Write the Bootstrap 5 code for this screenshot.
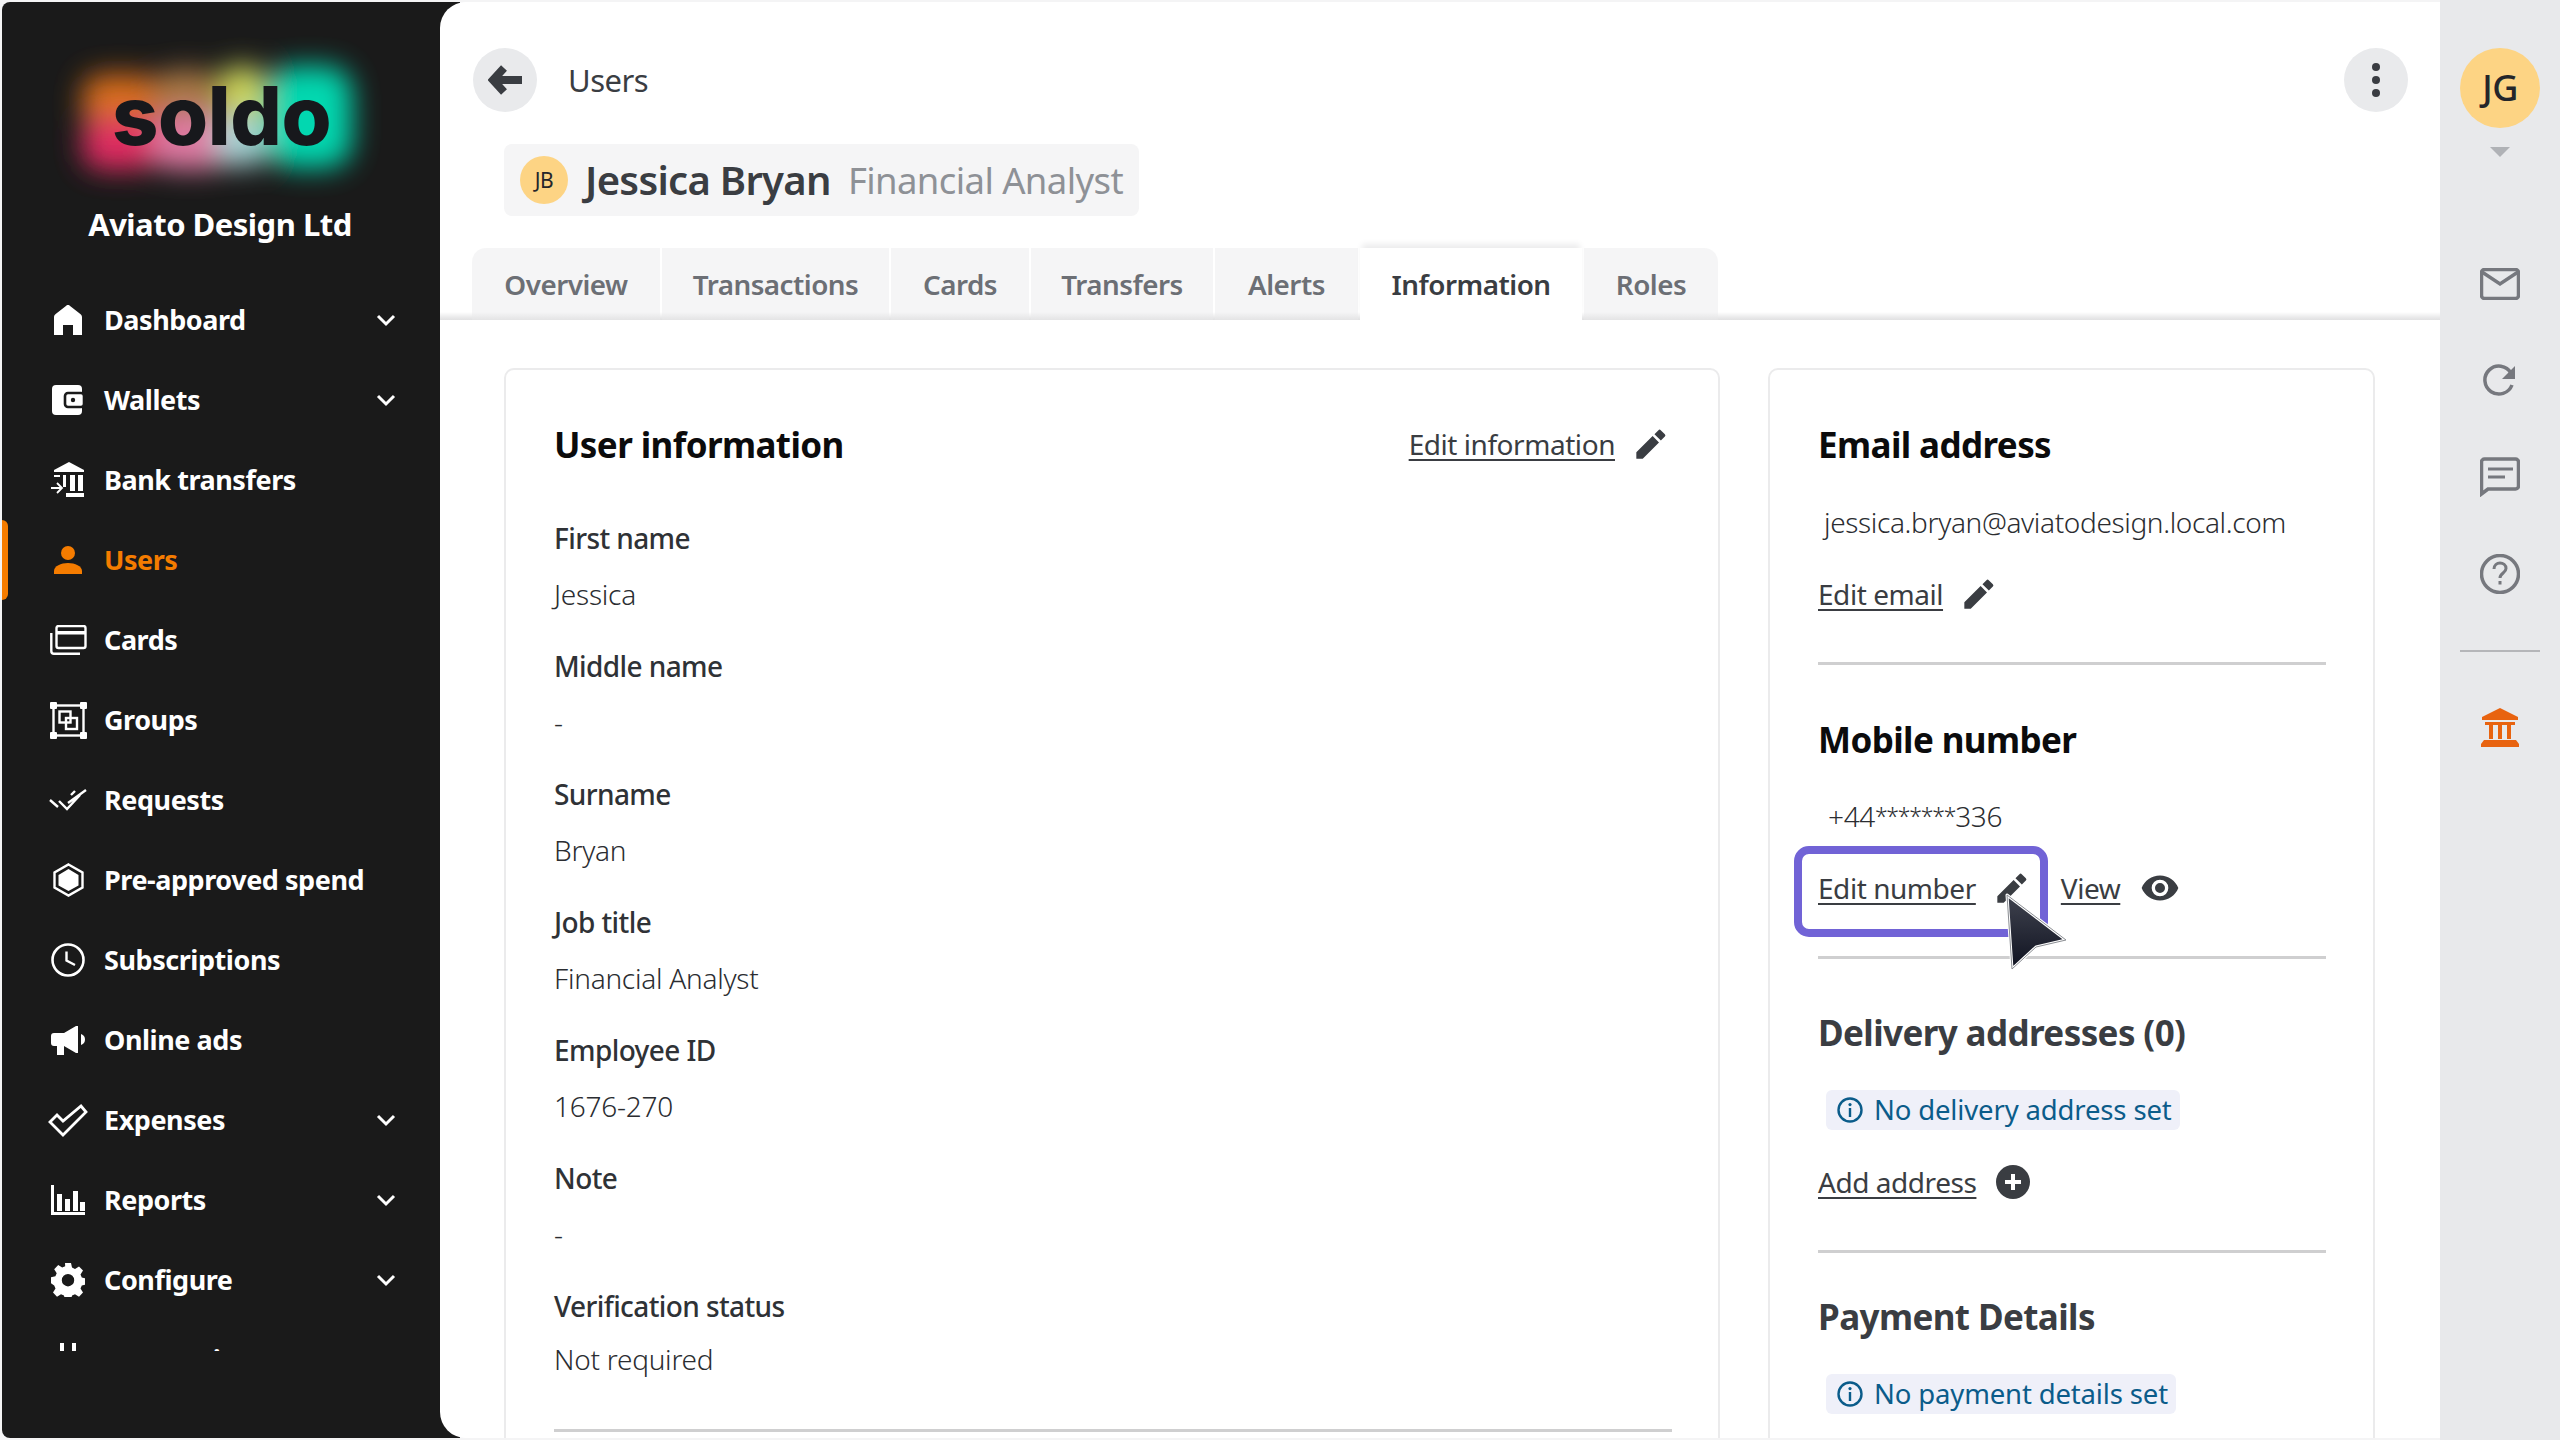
<!doctype html>
<html lang="en">
<head>
<meta charset="utf-8">
<title>Soldo - Users</title>
<link href="https://cdn.jsdelivr.net/npm/bootstrap@5.3.0/dist/css/bootstrap.min.css" rel="stylesheet">
<style>
html,body{height:100%;margin:0;overflow:hidden;background:#f4f4f5}
body{font-family:"Noto Sans","Open Sans",sans-serif;font-size:28px;line-height:42px;color:#3a3d42;letter-spacing:-.45px}
a{color:inherit}
.app-frame{height:1440px;padding:2px 0 2px 2px}
.side-col{width:458px;flex:none;background:#1a1a1a;border-radius:8px 0 0 8px;margin-right:-20px;height:1436px;color:#fff;overflow:hidden}
.logo-box{height:182px;padding-left:60px;padding-top:46px}
.org-name{font-size:31px;font-weight:700;line-height:50px;text-align:center;width:436px;height:96px;padding-top:15px;letter-spacing:-.5px}
.side-list{height:1071px;overflow:hidden;width:436px;position:relative;margin:0;padding:0;list-style:none}
.side-link{display:flex;align-items:center;height:80px;color:#fff;text-decoration:none;font-weight:700;font-size:27px;letter-spacing:-.45px;position:relative}
.side-link.is-on{color:#f57c00}
.side-link.is-on::before{content:"";position:absolute;left:0;top:0;bottom:0;width:6px;background:#f57c00;border-radius:0 6px 6px 0}
.side-ico{width:102px;flex:none;display:flex;justify-content:center;padding-left:30px;box-sizing:border-box}
.side-ico svg{display:block}
.side-chev{margin-left:auto;margin-right:42px}
.main-col{flex:1 1 auto;min-width:0;background:#fff;border-radius:26px 0 0 26px;position:relative;height:1436px;overflow:hidden}
.top-row{padding:46px 32px 32px 33px;align-items:flex-start}
.round-btn{width:64px;height:64px;border-radius:50%;background:#e9eaec;display:flex;align-items:center;justify-content:center;flex:none}
.crumb{font-size:31px;margin-left:31px;line-height:64px;color:#3a3d42;letter-spacing:-.5px}
.name-chip{display:flex;align-items:center;margin-left:64px;height:72px;padding:0 16px;background:#f5f5f6;border-radius:8px}
.chip-avatar{width:48px;height:48px;border-radius:50%;background:#fdd484;color:#24262a;font-size:21px;display:flex;align-items:center;justify-content:center;margin-right:17px;letter-spacing:-.5px}
.chip-name{font-size:40px;font-weight:600;margin-right:17px;letter-spacing:-.7px}
.chip-role{font-size:36.500px;color:#8e9196;letter-spacing:-.6px}
.tab-strip{margin-top:32px;padding-left:32px;height:72px;background:linear-gradient(to bottom,transparent 64px,#e7e7e8 70px,#e1e1e2 72px);flex-wrap:nowrap}
.tab-strip .nav-link{height:72px;padding:0;display:flex;align-items:center;justify-content:center;color:#6c6f75;font-weight:600;font-size:27.800px;letter-spacing:-.5px;background:linear-gradient(to bottom,#f5f5f6 64px,#e4e4e5 72px);margin-right:2px}
.tab-strip .nav-link.active{background:#fff;color:#3a3d42;box-shadow:0 -6px 6px -2px #ececed}
.tw1{width:188px;border-top-left-radius:14px}.tw2{width:227px}.tw3{width:138px}.tw4{width:182px}.tw5{width:143px}.tw6{width:222px}.tw7{width:134px;border-top-right-radius:14px;margin-right:0!important}
.content-row{padding:48px 66px 0 64px;gap:48px;align-items:flex-start}
.panel{border:2px solid #ebebec;border-radius:10px;background:#fff;height:1200px;flex:none;box-shadow:none}
.panel-a{width:1216px;padding:50px 51px 0 48px}
.panel-b{width:607px;padding:50px 48px 0 48px}
.panel-title{font-size:35px;font-weight:700;line-height:50px;color:#0b0b0c;margin:0;letter-spacing:-.6px}
.panel-title.soft{color:#3a3d42}
.title-mobile{margin-top:50px}
.title-delivery{margin-top:49px}
.title-payment{margin-top:39px}
.edit-link{font-size:28px;text-underline-offset:4px;text-decoration-thickness:2px;color:#3a3d42}
.edit-link-top{position:relative;top:-1px}
.view-link{margin-left:33px}
.ico-gap{margin-left:20px;display:inline-block;vertical-align:-3px}
.info-list{margin:47px 0 0}
.info-list dt{font-weight:500;line-height:42px;margin-bottom:14px;color:#2f3236;letter-spacing:-.6px}
.info-list dt:last-of-type{margin-bottom:11px}
.info-list dd{line-height:42px;margin:0 0 30px;font-weight:300;color:#2b2d31;letter-spacing:-.25px}
.info-rule{height:3px;background:#cfcfd0;margin-top:19px;width:1118px}
.sec-rule{height:3px;background:#cfcfd0;width:508px;margin:47px 0 0}
.sec-rule.tight{margin-top:47px}
.plain-val{margin:31px 0 0 6px;font-weight:300;line-height:42px;color:#2b2d31;letter-spacing:-.36px}
.plain-val.phone{margin:30px 0 0 10px}
.star-run{font-size:23px;letter-spacing:-1.200px;vertical-align:2px}
.link-row{margin-top:30px;line-height:42px;position:relative}
.link-row.add-row{margin-top:28px}
.mark-box{position:absolute;left:-24px;top:-21px;width:254px;height:91px;border:8px solid #7163d6;border-radius:15px}
.arrow-cur{position:absolute;left:183px;top:24px;z-index:3}
.note-pill{display:inline-flex;align-items:center;height:40px;margin:32px 0 0 8px;padding:0 8px 0 11px;background:#eff0f9;border-radius:6px;color:#0b5c8a;font-size:27.500px;gap:11px;letter-spacing:-.15px}
.rail-col{width:120px;flex:none;background:#e8e9eb;height:1440px;margin-top:-2px;margin-right:0}
.rail-avatar{width:80px;height:80px;border-radius:50%;background:#fdd484;color:#24262a;font-size:36px;font-weight:500;display:flex;align-items:center;justify-content:center;margin-top:48px}
.rail-tri{width:0;height:0;border-left:10px solid transparent;border-right:10px solid transparent;border-top:10px solid #b0b2b6;margin-top:19px;margin-bottom:111px}
.rail-rule{width:80px;height:2px;background:#b5b6b9;margin:56px 0 56px}
.rail-ico{display:block}
.rail-gap-a{margin-top:64px}.rail-gap-b{margin-top:61px}.rail-gap-c{margin-top:57px}
.logo-art{overflow:visible;display:block}
</style>
</head>
<body>
<svg width="0" height="0" class="position-absolute">
<defs>
<symbol id="i-chev" viewBox="0 0 20 14"><path d="M2 3l8 8 8-8" fill="none" stroke="currentColor" stroke-width="3"/></symbol>
<symbol id="i-pen" viewBox="0 0 24 24"><path fill="#3a3d42" d="M1 18.200V23h4.800L18 10.800 13.200 6zM19.400 9.400l3-3a1.200 1.200 0 0 0 0-1.700l-3.100-3.100a1.200 1.200 0 0 0-1.700 0l-3 3z"/></symbol>
<symbol id="i-info" viewBox="0 0 26 26"><circle cx="13" cy="13" r="11.500" fill="none" stroke="#0b5c8a" stroke-width="2.400"/><circle cx="13" cy="7.600" r="1.600" fill="#0b5c8a"/><rect x="11.800" y="11" width="2.400" height="9" fill="#0b5c8a"/></symbol>
<filter id="glow" x="-30%" y="-30%" width="160%" height="160%"><feGaussianBlur stdDeviation="14"/></filter>
<linearGradient id="curfill" x1="0" y1="0" x2="0" y2="1"><stop offset="0" stop-color="#40434f"/><stop offset="1" stop-color="#0f1220"/></linearGradient>
</defs>
</svg>
<div class="app-frame d-flex">
  <aside class="side-col d-flex flex-column">
    <div class="logo-box">
      <svg class="logo-art" width="320" height="136" viewBox="0 0 320 136">
        <g filter="url(#glow)" opacity=".92">
          <rect x="20" y="26" width="76" height="56" rx="20" fill="#e8751f"/>
          <rect x="20" y="70" width="76" height="52" rx="20" fill="#f02f68"/>
          <rect x="92" y="22" width="64" height="48" rx="20" fill="#b98248"/>
          <rect x="90" y="66" width="76" height="56" rx="20" fill="#f082ae"/>
          <rect x="158" y="18" width="44" height="60" rx="16" fill="#dfe862"/>
          <rect x="154" y="68" width="50" height="50" rx="16" fill="#b4e4e6"/>
          <rect x="204" y="18" width="86" height="102" rx="26" fill="#00e8bd"/>
        </g>
        <text x="50" y="97" font-family="Inter,Lato,sans-serif" font-weight="800" font-size="81" fill="#17181c">soldo</text>
      </svg>
    </div>
    <div class="org-name">Aviato Design Ltd</div>
    <ul class="side-list">
      <li><a class="side-link" href="#"><span class="side-ico"><svg width="28" height="30" viewBox="0 0 28 30"><path fill="#fff" d="M14 0c1 0 1.500.5 2.400 1.200L26 8.800c1.300 1 2 2 2 3.400V30h-9V20H9v10H0V12.200C0 10.800.7 9.800 2 8.800l9.600-7.600C12.500.5 13 0 14 0z"/></svg></span>Dashboard<svg class="side-chev" width="20" height="14"><use href="#i-chev"/></svg></a></li>
      <li><a class="side-link" href="#"><span class="side-ico"><svg width="32" height="30" viewBox="0 0 32 30"><rect width="30" height="30" rx="4" fill="#fff"/><rect x="13" y="8" width="19" height="14" rx="3" fill="#fff" stroke="#1a1a1a" stroke-width="2.600"/><circle cx="21" cy="15" r="2.200" fill="#1a1a1a"/></svg></span>Wallets<svg class="side-chev" width="20" height="14"><use href="#i-chev"/></svg></a></li>
      <li><a class="side-link" href="#"><span class="side-ico"><svg width="34" height="36" viewBox="0 0 34 36"><path fill="#fff" d="M18 0l15 8v2H3V8z"/><rect x="3" y="13" width="6" height="2" fill="#fff"/><rect x="12" y="13" width="3" height="12" fill="#fff"/><rect x="19" y="13" width="5" height="16" fill="#fff"/><rect x="27" y="13" width="5" height="16" fill="#fff"/><rect x="15" y="31" width="18" height="4" fill="#fff"/><path d="M0 26h10M6 21l5 5-5 5" fill="none" stroke="#fff" stroke-width="1.800"/></svg></span>Bank transfers</a></li>
      <li><a class="side-link is-on" href="#"><span class="side-ico"><svg width="28" height="28" viewBox="0 0 28 28"><circle cx="14" cy="7" r="7" fill="#f57c00"/><path fill="#f57c00" d="M0 28v-3c0-5 7-8 14-8s14 3 14 8v3z"/></svg></span>Users</a></li>
      <li><a class="side-link" href="#"><span class="side-ico"><svg width="37" height="30" viewBox="0 0 37 30"><rect x="6.500" y="1" width="29" height="22" rx="2" fill="none" stroke="#fff" stroke-width="2.400"/><rect x="7" y="6" width="28" height="3.500" fill="#fff"/><path d="M1.300 8v18c0 1.500 1 2.700 2.700 2.700h26" fill="none" stroke="#fff" stroke-width="2.400"/></svg></span>Cards</a></li>
      <li><a class="side-link" href="#"><span class="side-ico"><svg width="37" height="37" viewBox="0 0 37 37"><rect x="3.500" y="3.500" width="30" height="30" fill="none" stroke="#fff" stroke-width="2.400"/><rect x="0" y="0" width="7" height="7" rx="1" fill="#fff"/><rect x="30" y="0" width="7" height="7" rx="1" fill="#fff"/><rect x="0" y="30" width="7" height="7" rx="1" fill="#fff"/><rect x="30" y="30" width="7" height="7" rx="1" fill="#fff"/><rect x="9.500" y="9.500" width="11" height="11" fill="none" stroke="#fff" stroke-width="2.400"/><rect x="16" y="16" width="11" height="11" fill="none" stroke="#fff" stroke-width="2.400"/></svg></span>Groups</a></li>
      <li><a class="side-link" href="#"><span class="side-ico"><svg width="38" height="23" viewBox="0 0 38 23"><path d="M1 11l8 7M10 12l8 8L31 6M19 14L37 1M26 2l-4 4" fill="none" stroke="#fff" stroke-width="2.400"/></svg></span>Requests</a></li>
      <li><a class="side-link" href="#"><span class="side-ico"><svg width="31" height="34" viewBox="0 0 31 34"><path d="M15.500 1.500L29.500 9.500v15L15.500 32.500 1.500 24.500v-15z" fill="none" stroke="#fff" stroke-width="2.400"/><path d="M15.500 6L25.500 12v10.500L15.500 28 5.500 22.500V12z" fill="#fff"/></svg></span>Pre-approved spend</a></li>
      <li><a class="side-link" href="#"><span class="side-ico"><svg width="34" height="34" viewBox="0 0 34 34"><circle cx="17" cy="17" r="15.500" fill="none" stroke="#fff" stroke-width="2.600"/><path d="M15.500 8.500v9L24 22" fill="none" stroke="#fff" stroke-width="2.400"/></svg></span>Subscriptions</a></li>
      <li><a class="side-link" href="#"><span class="side-ico"><svg width="34" height="29" viewBox="0 0 34 29"><path fill="#fff" d="M3 7h10L25 0h2v27h-2L13 20v9H6v-9H3a3 3 0 0 1-3-3V10a3 3 0 0 1 3-3z"/><path fill="#fff" d="M30 8c3 1 4 3 4 5.500S33 18 30 19z"/></svg></span>Online ads</a></li>
      <li><a class="side-link" href="#"><span class="side-ico"><svg width="40" height="33" viewBox="0 0 40 33"><path d="M2 18l7-7 6 6L33 2l5 6-23 23z" fill="none" stroke="#fff" stroke-width="2.800"/></svg></span>Expenses<svg class="side-chev" width="20" height="14"><use href="#i-chev"/></svg></a></li>
      <li><a class="side-link" href="#"><span class="side-ico"><svg width="34" height="30" viewBox="0 0 34 30"><path fill="#fff" d="M0 0h3v27h31v3H0zM6 9h5v17H6zM14 14h5v12h-5zM22 6h5v20h-5zM29 17h5v9h-5z"/></svg></span>Reports<svg class="side-chev" width="20" height="14"><use href="#i-chev"/></svg></a></li>
      <li><a class="side-link" href="#"><span class="side-ico"><svg width="34" height="34" viewBox="0 0 34 34"><path fill="#fff" fill-rule="evenodd" d="M14 0h6l1 4.600 3 1.300 4-2.500 4 4.200-2.500 4 1.300 3 4.400 1v6l-4.400 1-1.300 3 2.500 4-4 4.200-4-2.500-3 1.300-1 4.400h-6l-1-4.400-3-1.300-4 2.500-4-4.200 2.500-4-1.300-3L0 20.200v-6l4.400-1 1.300-3-2.500-4 4-4.200 4 2.500 3-1.300zM17 11a6.200 6.200 0 1 0 0 12.400A6.200 6.200 0 0 0 17 11z"/></svg></span>Configure<svg class="side-chev" width="20" height="14"><use href="#i-chev"/></svg></a></li>
      <li><a class="side-link" href="#"><span class="side-ico"><svg width="30" height="34" viewBox="0 0 30 34"><path fill="#fff" d="M7 0h4v8H7zM19 0h4v8h-4zM3 8h24v10c0 5-5 9-10 9v7h-4v-7C8 27 3 23 3 18z"/></svg></span>Integrations</a></li>
    </ul>
  </aside>
  <main class="main-col d-flex flex-column">
    <div class="top-row d-flex">
      <a class="round-btn" href="#" aria-label="Back"><svg width="34" height="30" viewBox="0 0 34 30"><path d="M16 3L5 15l11 12M6 15h28" fill="none" stroke="#3a3d42" stroke-width="8"/></svg></a>
      <span class="crumb">Users</span>
      <a class="round-btn ms-auto" href="#" aria-label="More"><svg width="8" height="34" viewBox="0 0 8 34"><circle cx="4" cy="4" r="4" fill="#3a3d42"/><circle cx="4" cy="17" r="4" fill="#3a3d42"/><circle cx="4" cy="30" r="4" fill="#3a3d42"/></svg></a>
    </div>
    <div class="d-flex"><div class="name-chip"><span class="chip-avatar">JB</span><span class="chip-name">Jessica Bryan</span><span class="chip-role">Financial Analyst</span></div></div>
    <nav class="nav tab-strip">
      <a class="nav-link tw1" href="#">Overview</a>
      <a class="nav-link tw2" href="#">Transactions</a>
      <a class="nav-link tw3" href="#">Cards</a>
      <a class="nav-link tw4" href="#">Transfers</a>
      <a class="nav-link tw5" href="#">Alerts</a>
      <a class="nav-link active tw6" href="#">Information</a>
      <a class="nav-link tw7" href="#">Roles</a>
    </nav>
    <div class="content-row d-flex">
      <section class="card panel panel-a">
        <div class="d-flex align-items-center justify-content-between">
          <h2 class="panel-title">User information</h2>
          <span class="d-flex align-items-center edit-link-top"><a class="edit-link" href="#">Edit information</a><svg class="ico-gap" width="32" height="32"><use href="#i-pen"/></svg></span>
        </div>
        <dl class="info-list">
          <dt>First name</dt><dd>Jessica</dd>
          <dt>Middle name</dt><dd>-</dd>
          <dt>Surname</dt><dd>Bryan</dd>
          <dt>Job title</dt><dd>Financial Analyst</dd>
          <dt>Employee ID</dt><dd>1676-270</dd>
          <dt>Note</dt><dd>-</dd>
          <dt>Verification status</dt><dd>Not required</dd>
        </dl>
        <div class="info-rule"></div>
      </section>
      <section class="card panel panel-b">
        <h2 class="panel-title">Email address</h2>
        <p class="plain-val">jessica.bryan@aviatodesign.local.com</p>
        <div class="link-row d-flex align-items-center"><a class="edit-link" href="#">Edit email</a><svg class="ico-gap" width="32" height="32"><use href="#i-pen"/></svg></div>
        <div class="sec-rule"></div>
        <h2 class="panel-title title-mobile">Mobile number</h2>
        <p class="plain-val phone">+44<span class="star-run">*******</span>336</p>
        <div class="link-row d-flex align-items-center">
          <a class="edit-link" href="#">Edit number</a><svg class="ico-gap" width="32" height="32"><use href="#i-pen"/></svg>
          <a class="edit-link view-link" href="#">View</a><svg class="ico-gap" width="40" height="40" viewBox="0 0 24 24"><path fill="#3a3d42" d="M12 4.500C7 4.500 2.730 7.610 1 12c1.730 4.390 6 7.500 11 7.500s9.270-3.110 11-7.500c-1.730-4.390-6-7.500-11-7.500zM12 17a5 5 0 1 1 0-10 5 5 0 0 1 0 10zm0-8a3 3 0 1 0 0 6 3 3 0 0 0 0-6z"/></svg>
          <span class="mark-box"></span>
          <svg class="arrow-cur" width="68" height="84" viewBox="0 0 68 84"><path d="M6 4l59 45-30 7-24 22z" fill="url(#curfill)" stroke="#fff" stroke-width="3" stroke-linejoin="round"/><path d="M6 4l59 45-30 7-24 22z" fill="none" stroke="#8a8d92" stroke-width="1" stroke-linejoin="round"/></svg>
        </div>
        <div class="sec-rule tight"></div>
        <h2 class="panel-title soft title-delivery">Delivery addresses (0)</h2>
        <div><span class="note-pill"><svg width="26" height="26"><use href="#i-info"/></svg>No delivery address set</span></div>
        <div class="link-row add-row d-flex align-items-center"><a class="edit-link" href="#">Add address</a><svg class="ico-gap" width="34" height="36" viewBox="0 0 34 36"><circle cx="17" cy="18" r="17" fill="#3a3d42"/><path d="M17 10v16M9 18h16" stroke="#fff" stroke-width="4"/></svg></div>
        <div class="sec-rule"></div>
        <h2 class="panel-title soft title-payment">Payment Details</h2>
        <div><span class="note-pill"><svg width="26" height="26"><use href="#i-info"/></svg>No payment details set</span></div>
      </section>
    </div>
  </main>
  <aside class="rail-col d-flex flex-column align-items-center">
    <div class="rail-avatar">JG</div>
    <div class="rail-tri"></div>
    <svg class="rail-ico" width="40" height="32" viewBox="0 0 40 32"><rect x="1.500" y="1.500" width="37" height="29" rx="3" fill="none" stroke="#76787e" stroke-width="3.500"/><path d="M2 4l18 12L38 4" fill="none" stroke="#76787e" stroke-width="3.500"/></svg>
    <svg class="rail-ico rail-gap-a" width="34" height="32" viewBox="0 0 34 32"><path d="M29 21a14 14 0 1 1-1-12" fill="none" stroke="#76787e" stroke-width="3.500"/><path d="M32 2v13H19z" fill="#76787e"/></svg>
    <svg class="rail-ico rail-gap-b" width="40" height="40" viewBox="0 0 40 40"><path d="M1.500 37V5a3 3 0 0 1 3-3h31a3 3 0 0 1 3 3v24a3 3 0 0 1-3 3H8z" fill="none" stroke="#76787e" stroke-width="3.500"/><path d="M8 12h25M8 20h17" stroke="#76787e" stroke-width="3"/></svg>
    <svg class="rail-ico rail-gap-c" width="40" height="40" viewBox="0 0 40 40"><circle cx="20" cy="20" r="18.500" fill="none" stroke="#76787e" stroke-width="3.500"/><path d="M14 15c0-4 3-6 6-6s6 2 6 5.500c0 4.500-6 4.500-6 9.500" fill="none" stroke="#76787e" stroke-width="3"/><rect x="18.500" y="27" width="3" height="3.500" fill="#76787e"/></svg>
    <div class="rail-rule"></div>
    <svg class="rail-ico" width="40" height="40" viewBox="0 0 40 40"><path fill="#e8630f" d="M20 0l18 9v3H2V9z"/><path fill="#e8630f" d="M5 14h30v3H5zM9 17h4v14H9zM18 17h4v14h-4zM27 17h4v14h-4zM4 32h32l3 4v3H1v-3z"/></svg>
  </aside>
</div>
</body>
</html>
